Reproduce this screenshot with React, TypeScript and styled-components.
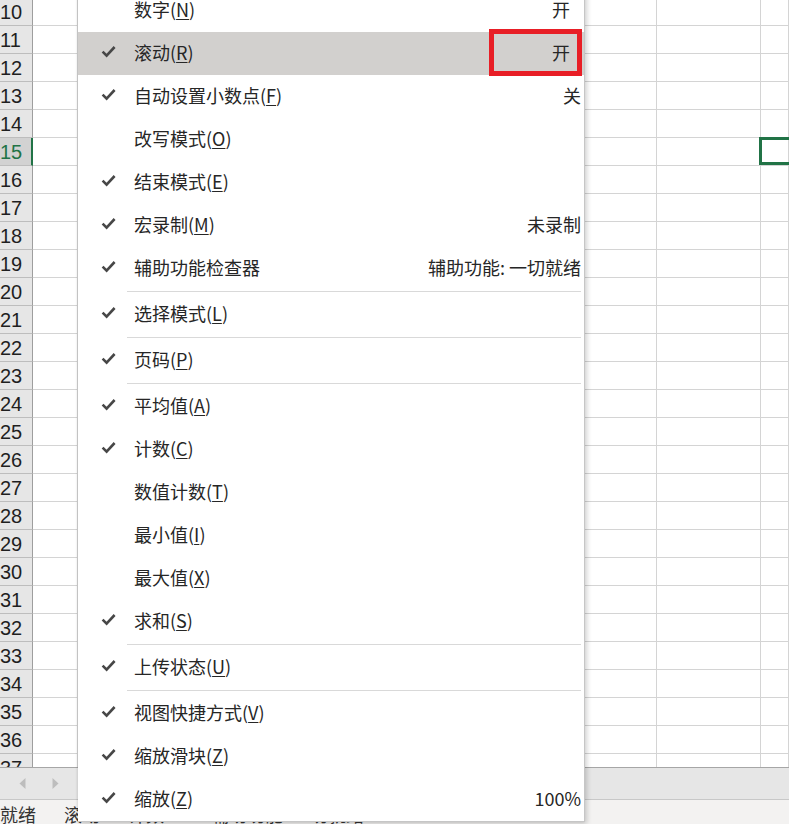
import styled, { createGlobalStyle } from 'styled-components'

const GlobalStyle = createGlobalStyle`
  html, body {
    margin: 0;
    padding: 0;
    background: #ffffff;
    overflow: hidden;
  }
  * {
    box-sizing: border-box;
  }
`

const Screen = styled.div`
  position: relative;
  width: 789px;
  height: 824px;
  overflow: hidden;
  display: flex;
  flex-direction: column;
  font-family: "Noto Sans CJK SC", "Noto Sans", sans-serif;
`

const Sheet = styled.div`
  height: 767px;
  overflow: hidden;
  flex: none;
`

const Rows = styled.div`
  margin-top: -2px;
  display: flex;
  flex-direction: column;
`

const Row = styled.div`
  display: flex;
  height: 28px;
  flex: none;
`

const RowHeader = styled.div<{ $active?: boolean }>`
  width: 33px;
  flex: none;
  height: 28px;
  padding-right: 12px;
  background: ${(p) => (p.$active ? '#d2d2d2' : '#e6e6e6')};
  border-bottom: 1px solid #bdbdbd;
  border-right: ${(p) => (p.$active ? '2px solid #217346' : '1px solid #9e9e9e')};
  color: ${(p) => (p.$active ? '#217346' : '#1f1f1f')};
  font-family: "Liberation Sans", Arial, sans-serif;
  font-size: 20px;
  line-height: 28px;
  text-align: center;
  overflow: hidden;
  white-space: nowrap;
`

const Cell = styled.div<{ $w?: number; $selected?: boolean }>`
  position: relative;
  width: ${(p) => (p.$w ? `${p.$w}px` : 'auto')};
  flex: ${(p) => (p.$w ? 'none' : '1')};
  height: 28px;
  border-right: 1px solid #d4d4d4;
  border-bottom: 1px solid #d4d4d4;

  ${(p) =>
    p.$selected &&
    `
    &::after {
      content: '';
      position: absolute;
      left: -2px;
      top: -1px;
      right: -10px;
      bottom: 0;
      border: 3px solid #217346;
    }
  `}
`

const TabBar = styled.div`
  height: 33px;
  flex: none;
  background: #e6e6e6;
  border-top: 1px solid #a6a6a6;
  border-bottom: 1px solid #c8c8c8;
  display: flex;
  align-items: center;
  padding-left: 19px;
  gap: 26px;
`

const StatusBar = styled.div`
  flex: 1;
  background: #f3f2f1;
  display: flex;
  align-items: flex-start;
  gap: 28px;
  padding-top: 2px;
  color: #333;
  font-size: 18px;
  line-height: 24px;
  white-space: nowrap;
`

const Menu = styled.div`
  position: absolute;
  left: 78px;
  top: -11px;
  width: 507px;
  background: #ffffff;
  border-right: 1px solid #c6c6c6;
  border-bottom: 1px solid #c6c6c6;
  box-shadow: 2px 2px 5px rgba(0, 0, 0, 0.18), -1px 0 2px rgba(0, 0, 0, 0.08);
  display: flex;
  flex-direction: column;
`

const Item = styled.div<{ $hover?: boolean }>`
  position: relative;
  height: 43px;
  display: flex;
  align-items: center;
  padding-right: 2px;
  padding-bottom: 4px;
  background: ${(p) => (p.$hover ? '#d2d0ce' : 'transparent')};
  color: #262626;
  font-size: 18px;
  white-space: nowrap;
`

const CheckSlot = styled.div`
  width: 56px;
  flex: none;
  padding-left: 23px;
  display: flex;
  align-items: center;
`

const Label = styled.span`
  flex: 1;

  u {
    text-decoration: underline;
    text-underline-offset: 2px;
    text-decoration-thickness: 1px;
  }
`

const Value = styled.span<{ $inset?: boolean }>`
  padding-right: ${(p) => (p.$inset ? '12px' : '1px')};
`

const Separator = styled.div`
  height: 3px;
  margin-left: 49px;
  margin-right: 3px;
  display: flex;
  align-items: center;

  &::before {
    content: '';
    flex: 1;
    height: 1px;
    background: #d9d9d9;
  }
`

const Highlight = styled.div`
  position: absolute;
  left: 411px;
  right: 2px;
  top: -3px;
  bottom: -1px;
  border: 5px solid #e81e26;
`

const Check = () => (
  <svg width="15" height="13" viewBox="0 0 15 13">
    <path d="M1.6 6.6 L5.6 10.6 L13.6 2" fill="none" stroke="#474747" strokeWidth="2.6" />
  </svg>
)

const Arrow = ({ dir }: { dir: 'left' | 'right' }) => (
  <svg width="7" height="11" viewBox="0 0 7 11">
    <path d={dir === 'left' ? 'M6.5 0 L0.5 5.5 L6.5 11 Z' : 'M0.5 0 L6.5 5.5 L0.5 11 Z'} fill="#bdbdbd" />
  </svg>
)

type Entry =
  | { sep: true }
  | {
      sep?: false
      text: string
      key?: string
      checked?: boolean
      value?: string
      inset?: boolean
      hover?: boolean
    }

const entries: Entry[] = [
  { text: '数字', key: 'N', value: '开', inset: true },
  { text: '滚动', key: 'R', value: '开', inset: true, checked: true, hover: true },
  { text: '自动设置小数点', key: 'F', value: '关', checked: true },
  { text: '改写模式', key: 'O' },
  { text: '结束模式', key: 'E', checked: true },
  { text: '宏录制', key: 'M', value: '未录制', checked: true },
  { text: '辅助功能检查器', value: '辅助功能: 一切就绪', checked: true },
  { sep: true },
  { text: '选择模式', key: 'L', checked: true },
  { sep: true },
  { text: '页码', key: 'P', checked: true },
  { sep: true },
  { text: '平均值', key: 'A', checked: true },
  { text: '计数', key: 'C', checked: true },
  { text: '数值计数', key: 'T' },
  { text: '最小值', key: 'I' },
  { text: '最大值', key: 'X' },
  { text: '求和', key: 'S', checked: true },
  { sep: true },
  { text: '上传状态', key: 'U', checked: true },
  { sep: true },
  { text: '视图快捷方式', key: 'V', checked: true },
  { text: '缩放滑块', key: 'Z', checked: true },
  { text: '缩放', key: 'Z', value: '100%', checked: true },
]

const rowNumbers = Array.from({ length: 28 }, (_, i) => i + 10)

export default function App() {
  return (
    <Screen>
      <GlobalStyle />
      <Sheet>
        <Rows>
          {rowNumbers.map((n) => (
            <Row key={n}>
              <RowHeader $active={n === 15}>{n}</RowHeader>
              <Cell $w={45} />
              <Cell $w={579} />
              <Cell $w={104} />
              <Cell $selected={n === 15} />
            </Row>
          ))}
        </Rows>
      </Sheet>
      <TabBar>
        <Arrow dir="left" />
        <Arrow dir="right" />
      </TabBar>
      <StatusBar>
        <span>就绪</span>
        <span>滚动</span>
        <span>计数: 0</span>
        <span>辅助功能: 一切就绪</span>
      </StatusBar>

      <Menu>
        {entries.map((e, i) =>
          e.sep ? (
            <Separator key={i} />
          ) : (
            <Item key={i} $hover={e.hover}>
              <CheckSlot>{e.checked && <Check />}</CheckSlot>
              <Label>
                {e.text}
                {e.key && (
                  <>
                    (<u>{e.key}</u>)
                  </>
                )}
              </Label>
              {e.value && <Value $inset={e.inset}>{e.value}</Value>}
              {e.hover && <Highlight />}
            </Item>
          )
        )}
      </Menu>
    </Screen>
  )
}
